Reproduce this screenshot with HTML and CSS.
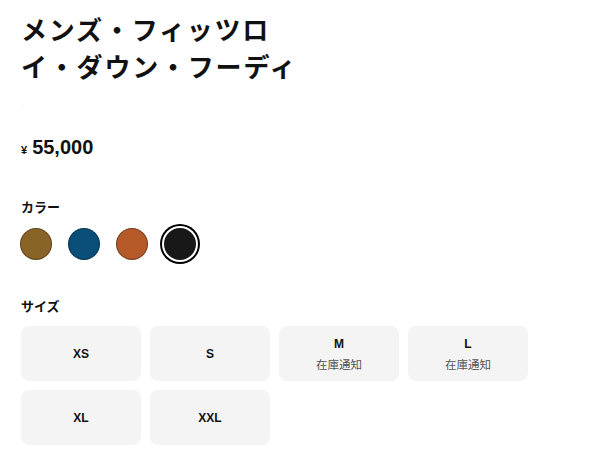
FILE: index.html
```html
<!DOCTYPE html>
<html lang="ja">
<head>
<meta charset="utf-8">
<link rel="stylesheet" href="styles.css">
</head>
<body>
<main class="product">
  <h1 class="title">メンズ・フィッツロイ・ダウン・フーディ</h1>
  <div class="note"></div>
  <p class="price"><span class="yen">¥</span><span class="amount">55,000</span></p>

  <section class="colors">
    <h2 class="label">カラー</h2>
    <div class="swatches">
      <span class="swatch brown"></span>
      <span class="swatch blue"></span>
      <span class="swatch rust"></span>
      <span class="swatch black selected"></span>
    </div>
  </section>

  <section class="sizes">
    <h2 class="label">サイズ</h2>
    <div class="size-grid">
      <button class="size"><span class="size-name">XS</span></button>
      <button class="size"><span class="size-name">S</span></button>
      <button class="size"><span class="size-name">M</span><span class="stock">在庫通知</span></button>
      <button class="size"><span class="size-name">L</span><span class="stock">在庫通知</span></button>
      <button class="size"><span class="size-name">XL</span></button>
      <button class="size"><span class="size-name">XXL</span></button>
    </div>
  </section>
</main>
</body>
</html>
```
FILE: styles.css
```css
html, body {
  margin: 0;
  padding: 0;
  background: #fff;
}
body {
  font-family: "Liberation Sans", Arial, "Noto Sans CJK JP", sans-serif;
  color: #111;
}
.product {
  padding: 10px 21px 0 21px;
}
.title {
  margin: 0;
  width: 290px;
  font-family: "Noto Sans CJK JP", sans-serif;
  font-size: 26px;
  font-weight: 700;
  line-height: 37px;
  letter-spacing: 1.8px;
  color: #111;
}
.note {
  width: 2px;
  height: 1px;
  margin: 22px 0 0 0;
  background: #eee;
}
.price {
  margin: 30px 0 0 0;
  display: flex;
  align-items: baseline;
  gap: 5px;
  line-height: 20px;
}
.yen {
  font-size: 11px;
  font-weight: 700;
}
.amount {
  font-size: 20px;
  font-weight: 700;
}
.colors {
  margin-top: 38px;
}
.label {
  margin: 0;
  font-family: "Noto Sans CJK JP", sans-serif;
  font-size: 13px;
  font-weight: 700;
  line-height: 18px;
}
.swatches {
  display: flex;
  gap: 16px;
  margin-top: 12px;
  margin-left: -1px;
}
.swatch {
  width: 32px;
  height: 32px;
  border-radius: 50%;
  box-sizing: border-box;
  border: 1px solid rgba(0,0,0,0.35);
}
.brown { background: #8a6426; }
.blue { background: #0a4f79; }
.rust { background: #b65a2a; }
.black { background: #181818; }
.swatch.selected {
  border: none;
  box-shadow: 0 0 0 2px #fff, 0 0 0 4px #000;
}
.sizes {
  margin-top: 37px;
}
.size-grid {
  display: grid;
  grid-template-columns: repeat(4, 120px);
  gap: 9px;
  margin-top: 11px;
}
.size {
  height: 55px;
  border: none;
  border-radius: 8px;
  background: #f4f4f4;
  display: flex;
  flex-direction: column;
  align-items: center;
  justify-content: center;
  gap: 6px;
  padding: 0;
  font-family: "Liberation Sans", Arial, sans-serif;
}
.size-name {
  font-size: 12px;
  font-weight: 700;
  color: #111;
  line-height: 14px;
}
.stock {
  font-family: "Noto Sans CJK JP", sans-serif;
  font-size: 11.5px;
  color: #555;
  line-height: 14px;
}
```
